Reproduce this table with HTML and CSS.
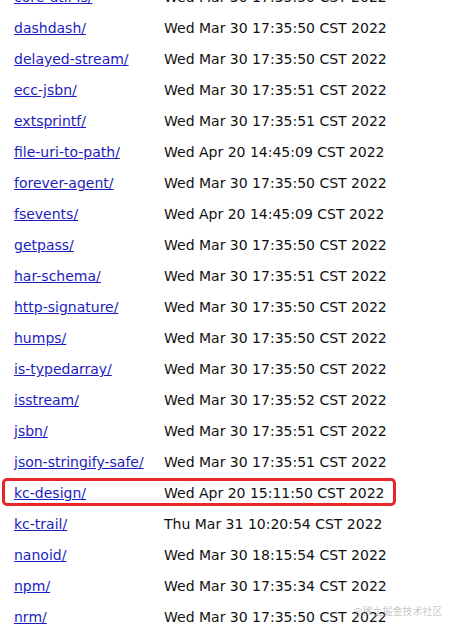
FILE: index.html
```
<!DOCTYPE html>
<html>
<head>
<meta charset="utf-8">
<link rel="stylesheet" href="styles.css">
</head>
<body>
<div class="list">
  <div class="row"><a href="#">core-util-is/</a><span>Wed Mar 30 17:35:50 CST 2022</span></div>
  <div class="row"><a href="#">dashdash/</a><span>Wed Mar 30 17:35:50 CST 2022</span></div>
  <div class="row"><a href="#">delayed-stream/</a><span>Wed Mar 30 17:35:50 CST 2022</span></div>
  <div class="row"><a href="#">ecc-jsbn/</a><span>Wed Mar 30 17:35:51 CST 2022</span></div>
  <div class="row"><a href="#">extsprintf/</a><span>Wed Mar 30 17:35:51 CST 2022</span></div>
  <div class="row"><a href="#">file-uri-to-path/</a><span>Wed Apr 20 14:45:09 CST 2022</span></div>
  <div class="row"><a href="#">forever-agent/</a><span>Wed Mar 30 17:35:50 CST 2022</span></div>
  <div class="row"><a href="#">fsevents/</a><span>Wed Apr 20 14:45:09 CST 2022</span></div>
  <div class="row"><a href="#">getpass/</a><span>Wed Mar 30 17:35:50 CST 2022</span></div>
  <div class="row"><a href="#">har-schema/</a><span>Wed Mar 30 17:35:51 CST 2022</span></div>
  <div class="row"><a href="#">http-signature/</a><span>Wed Mar 30 17:35:50 CST 2022</span></div>
  <div class="row"><a href="#">humps/</a><span>Wed Mar 30 17:35:50 CST 2022</span></div>
  <div class="row"><a href="#">is-typedarray/</a><span>Wed Mar 30 17:35:50 CST 2022</span></div>
  <div class="row"><a href="#">isstream/</a><span>Wed Mar 30 17:35:52 CST 2022</span></div>
  <div class="row"><a href="#">jsbn/</a><span>Wed Mar 30 17:35:51 CST 2022</span></div>
  <div class="row"><a href="#">json-stringify-safe/</a><span>Wed Mar 30 17:35:51 CST 2022</span></div>
  <div class="row highlight"><a href="#">kc-design/</a><span>Wed Apr 20 15:11:50 CST 2022</span></div>
  <div class="row"><a href="#">kc-trail/</a><span>Thu Mar 31 10:20:54 CST 2022</span></div>
  <div class="row"><a href="#">nanoid/</a><span>Wed Mar 30 18:15:54 CST 2022</span></div>
  <div class="row"><a href="#">npm/</a><span>Wed Mar 30 17:35:34 CST 2022</span></div>
  <div class="row"><a href="#">nrm/</a><span>Wed Mar 30 17:35:50 CST 2022</span></div>
</div>
<div class="watermark">@稀土掘金技术社区</div>
</body>
</html>
```
FILE: styles.css
```
html, body {
  margin: 0;
  padding: 0;
  background: #fff;
  overflow: hidden;
}
body {
  font-family: "DejaVu Sans", Verdana, sans-serif;
  font-size: 14px;
  color: #111;
}
.list {
  display: flex;
  flex-direction: column;
  gap: 3px;
  margin-top: -18px;
  padding: 0 2px;
  width: 394px;
}
.row {
  box-sizing: border-box;
  display: grid;
  grid-template-columns: 150px auto;
  align-items: center;
  height: 28px;
  padding: 2px 0 0 12px;
  white-space: nowrap;
}
.row a {
  color: #1d1dbf;
  text-decoration: underline;
}
.row span {
  color: #111;
}
.highlight {
  box-shadow: inset 0 0 0 3px #e8262a;
  border-radius: 5px;
}
.watermark {
  position: absolute;
  left: 353px;
  top: 603px;
  white-space: nowrap;
  font-family: "Noto Sans CJK SC", sans-serif;
  font-size: 10px;
  color: rgba(150, 150, 150, 0.55);
}
```
